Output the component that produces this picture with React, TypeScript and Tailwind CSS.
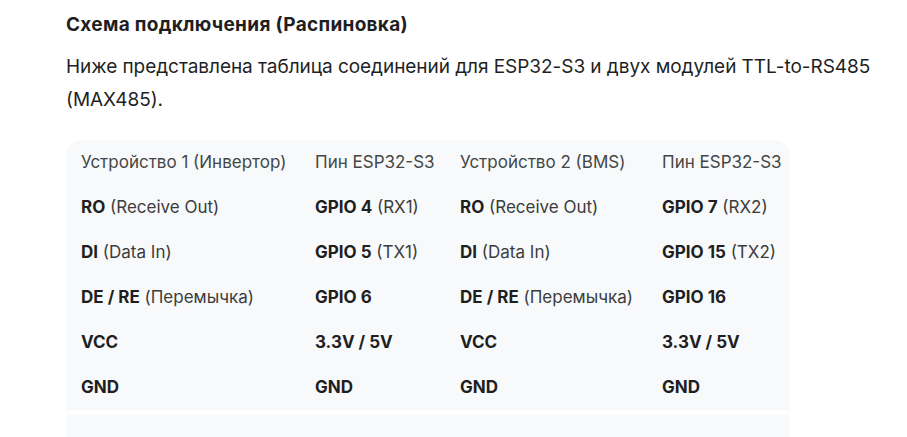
const ROWS: [string, string][][] = [
  [['RO', ' (Receive Out)'], ['GPIO 4', ' (RX1)'], ['RO', ' (Receive Out)'], ['GPIO 7', ' (RX2)']],
  [['DI', ' (Data In)'], ['GPIO 5', ' (TX1)'], ['DI', ' (Data In)'], ['GPIO 15', ' (TX2)']],
  [['DE / RE', ' (Перемычка)'], ['GPIO 6', ''], ['DE / RE', ' (Перемычка)'], ['GPIO 16', '']],
  [['VCC', ''], ['3.3V / 5V', ''], ['VCC', ''], ['3.3V / 5V', '']],
  [['GND', ''], ['GND', ''], ['GND', ''], ['GND', '']],
]

const HEAD = ['Устройство 1 (Инвертор)', 'Пин ESP32-S3', 'Устройство 2 (BMS)', 'Пин ESP32-S3']
const WIDTHS = ['w-[234px]', 'w-[145px]', 'w-[202px]', 'w-[128px]']

export default function App() {
  return (
    <div
      className="w-[907px] h-[437px] overflow-hidden bg-white text-[#1f1f1f]"
      style={{ fontFamily: 'Inter, "Noto Sans", sans-serif' }}
    >
      <div className="pl-[66px] pt-[13px]">
        <h3 className="text-[19px] font-bold leading-[24px] tracking-[0.3px]">
          Схема подключения (Распиновка)
        </h3>
        <p className="mt-[13px] w-[830px] text-[19px] leading-[33px] text-[#1f1f1f] tracking-[-0.05px]">
          Ниже представлена таблица соединений для ESP32-S3 и двух модулей TTL-to-RS485 (MAX485).
        </p>

        <div className="mt-[24px] w-[724px] rounded-t-[16px] bg-[#f7f9fb]">
          <table className="border-collapse text-[17px]">
            <thead>
              <tr className="h-[45px]">
                {HEAD.map((h, i) => (
                  <th key={i} className={`${WIDTHS[i]} pl-[15px] text-left font-normal text-[#444746] whitespace-nowrap`}>
                    {h}
                  </th>
                ))}
              </tr>
            </thead>
            <tbody>
              {ROWS.map((row, r) => (
                <tr key={r} className="h-[45px]">
                  {row.map(([b, rest], c) => (
                    <td key={c} className="pl-[15px] text-left text-[#1f1f1f] whitespace-nowrap">
                      <b className="font-bold">{b}</b>
                      <span className="text-[#3c3c3c]">{rest}</span>
                    </td>
                  ))}
                </tr>
              ))}
            </tbody>
          </table>
        </div>
        <div className="mt-[5px] w-[724px] h-[40px] bg-[#f7f9fb]" />
      </div>
    </div>
  )
}
